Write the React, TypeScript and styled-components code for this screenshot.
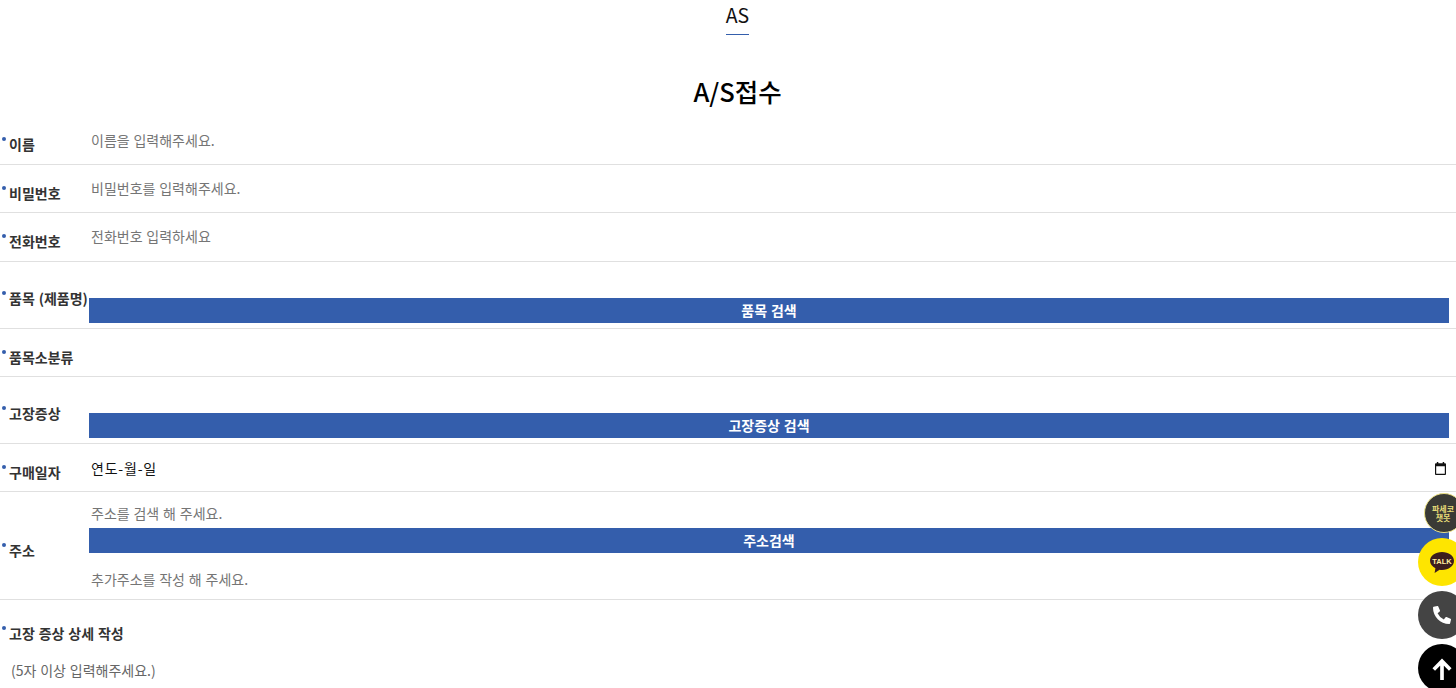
import styled, { createGlobalStyle } from "styled-components";
import { FaPhoneAlt } from "react-icons/fa";

const GlobalStyle = createGlobalStyle`
  html, body {
    margin: 0;
    padding: 0;
    background: #fff;
    overflow: hidden;
    height: 688px;
  }
  * {
    box-sizing: border-box;
    font-family: "Noto Sans CJK KR", "Noto Sans", sans-serif;
    word-spacing: 0.7px;
  }
`;

const Page = styled.div`
  width: 1456px;
  height: 688px;
  overflow: hidden;
`;

const TabBar = styled.div`
  display: flex;
  justify-content: center;
  height: 35px;
  padding-left: 19px;
`;

const Tab = styled.div`
  height: 35px;
  padding-top: 1px;
  font-size: 19.5px;
  line-height: 27px;
  color: #111;
  border-bottom: 1px solid #345eac;
`;

const Title = styled.h1`
  margin: 0;
  height: 82px;
  padding: 38px 0 0 19px;
  font-size: 25.5px;
  line-height: 36px;
  font-weight: 500;
  color: #000;
  text-align: center;
`;

const Row = styled.div<{ $height: number; $plain?: boolean }>`
  display: grid;
  grid-template-columns: 89px 1fr;
  height: ${(p) => p.$height}px;
  border-bottom: ${(p) => (p.$plain ? "none" : "1px solid #e0e0e0")};
`;

const Label = styled.div<{ $top: number }>`
  position: relative;
  padding: ${(p) => p.$top}px 0 0 9px;
  font-size: 14px;
  line-height: 20px;
  font-weight: 700;
  color: #333;
  white-space: nowrap;

  &::before {
    content: "";
    position: absolute;
    left: 2px;
    top: ${(p) => p.$top + 3}px;
    width: 4px;
    height: 4px;
    border-radius: 50%;
    background: #345eac;
  }
`;

const Field = styled.div<{ $top?: number }>`
  display: flex;
  flex-direction: column;
  padding: ${(p) => p.$top ?? 0}px 7px 0 0;
`;

const TextInput = styled.input`
  display: block;
  width: 100%;
  height: 24px;
  flex: none;
  padding: 0 2px;
  border: 0;
  outline: 0;
  background: transparent;
  font-size: 14px;
  line-height: 24px;
  color: #333;

  &::placeholder {
    color: #757575;
    opacity: 1;
  }
`;

const SearchButton = styled.button`
  display: block;
  width: 100%;
  height: 25px;
  flex: none;
  padding: 0;
  border: 0;
  background: #345eac;
  color: #fff;
  font-size: 14px;
  line-height: 25px;
  font-weight: 700;
  text-align: center;
`;

const DateField = styled.div`
  display: flex;
  align-items: center;
  justify-content: space-between;
  height: 24px;
  padding: 0 3px 0 2px;
  font-size: 14px;
  letter-spacing: 0.8px;
  color: #111;
`;

const AddressStack = styled.div`
  display: flex;
  flex-direction: column;
  gap: 3px;
`;

const AddressGap = styled.div`
  height: 8px;
`;

const Note = styled.div`
  padding-left: 11px;
  font-size: 14px;
  line-height: 20px;
  color: #666;
`;

const FloatDock = styled.div`
  position: fixed;
  top: 493px;
  left: 1418px;
  width: 48px;
  display: flex;
  flex-direction: column;
  align-items: flex-start;
`;

const ChatBadge = styled.div`
  width: 40px;
  height: 40px;
  flex: none;
  margin-left: 6px;
  padding-right: 2px;
  border-radius: 50%;
  background: #3a3a35;
  border: 1.5px solid #ece184;
  color: #e6dc78;
  display: flex;
  flex-direction: column;
  align-items: center;
  justify-content: center;
  font-size: 8px;
  line-height: 9px;
  font-weight: 700;
  white-space: nowrap;
  word-spacing: 0;
`;

const RoundButton = styled.div<{ $bg: string; $gap: number }>`
  width: 48px;
  height: 48px;
  margin-top: ${(p) => p.$gap}px;
  border-radius: 50%;
  background: ${(p) => p.$bg};
  display: flex;
  align-items: center;
  justify-content: center;
  flex: none;
`;

const TalkText = styled.text`
  font-size: 7.5px;
  font-weight: 700;
  fill: #fff0a0;
  font-family: "Liberation Sans", sans-serif;
`;

const ArrowIcon = styled.svg`
  margin-top: 2px;
`;

function CalendarIcon() {
  return (
    <svg width="11" height="13" viewBox="0 0 12 14">
      <path
        fill="#111"
        d="M2 0h1.6v1.4h4.8V0H10v1.4h1a1 1 0 0 1 1 1V13a1 1 0 0 1-1 1H1a1 1 0 0 1-1-1V2.4a1 1 0 0 1 1-1h1V0zM1.3 4.6v8.1h9.4V4.6H1.3z"
      />
    </svg>
  );
}

export default function App() {
  return (
    <Page>
      <GlobalStyle />
      <TabBar>
        <Tab>AS</Tab>
      </TabBar>
      <Title>A/S접수</Title>

      <Row $height={48}>
        <Label $top={17}>이름</Label>
        <Field $top={11}>
          <TextInput placeholder="이름을 입력해주세요." />
        </Field>
      </Row>
      <Row $height={48}>
        <Label $top={18}>비밀번호</Label>
        <Field $top={11}>
          <TextInput placeholder="비밀번호를 입력해주세요." />
        </Field>
      </Row>
      <Row $height={49}>
        <Label $top={18}>전화번호</Label>
        <Field $top={11}>
          <TextInput placeholder="전화번호 입력하세요" />
        </Field>
      </Row>
      <Row $height={67}>
        <Label $top={26}>품목 (제품명)</Label>
        <Field $top={36}>
          <SearchButton>품목 검색</SearchButton>
        </Field>
      </Row>
      <Row $height={48}>
        <Label $top={18}>품목소분류</Label>
        <Field />
      </Row>
      <Row $height={67}>
        <Label $top={26}>고장증상</Label>
        <Field $top={36}>
          <SearchButton>고장증상 검색</SearchButton>
        </Field>
      </Row>
      <Row $height={48}>
        <Label $top={18}>구매일자</Label>
        <Field $top={12}>
          <DateField>
            연도-월-일
            <CalendarIcon />
          </DateField>
        </Field>
      </Row>
      <Row $height={108}>
        <Label $top={48}>주소</Label>
        <Field $top={9}>
          <AddressStack>
            <TextInput placeholder="주소를 검색 해 주세요." />
            <SearchButton>주소검색</SearchButton>
            <AddressGap />
            <TextInput placeholder="추가주소를 작성 해 주세요." />
          </AddressStack>
        </Field>
      </Row>
      <Row $height={60} $plain>
        <Label $top={23}>고장 증상 상세 작성</Label>
        <Field />
      </Row>
      <Note>(5자 이상 입력해주세요.)</Note>

      <FloatDock>
        <ChatBadge>
          <span>파세코</span>
          <span>챗봇</span>
        </ChatBadge>
        <RoundButton $bg="#fee500" $gap={5}>
          <svg width="26" height="26" viewBox="0 0 26 26">
            <path
              fill="#3c1e1e"
              d="M13 3C6.4 3 1 6.9 1 11.8c0 3.1 2.2 5.8 5.4 7.4L5.6 24l5-3.2c.8.1 1.6.2 2.4.2 6.6 0 12-4 12-9.2S19.6 3 13 3z"
            />
            <TalkText x="13" y="14.5" textAnchor="middle">
              TALK
            </TalkText>
          </svg>
        </RoundButton>
        <RoundButton $bg="#444444" $gap={5}>
          <FaPhoneAlt size={18} color="#fff" />
        </RoundButton>
        <RoundButton $bg="#000000" $gap={5}>
          <ArrowIcon width="22" height="22" viewBox="0 0 24 24">
            <path
              fill="none"
              stroke="#fff"
              strokeWidth="4"
              d="M12 24V4M3 12.5 12 3.5l9 9"
            />
          </ArrowIcon>
        </RoundButton>
      </FloatDock>
    </Page>
  );
}
